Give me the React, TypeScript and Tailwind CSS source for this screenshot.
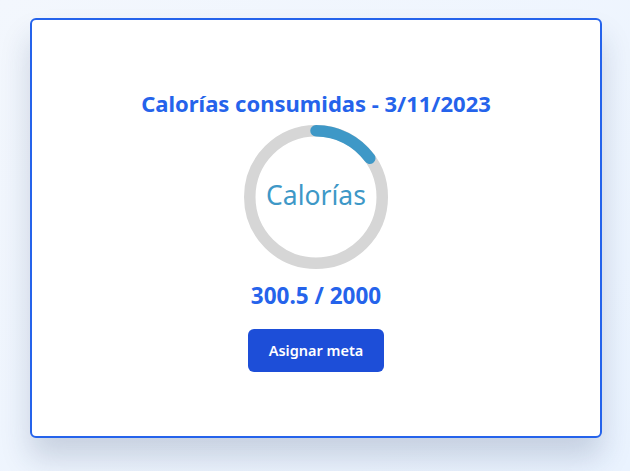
import React from "react";

export default function App() {
  const value = 300.5;
  const goal = 2000;
  const pct = value / goal;
  const r = 46;
  const c = 2 * Math.PI * r;
  return (
    <div
      className="w-[630px] h-[471px] bg-gradient-to-br from-[#f3f7fd] to-[#eaf3ff] pt-[18px] pl-[30px]"
      style={{ fontFamily: '"Noto Sans", "Open Sans", sans-serif' }}
    >
      <div className="w-[572px] h-[420px] bg-white border-2 border-[#2563eb] rounded-md shadow-[0_20px_30px_rgba(30,50,90,0.18)] flex flex-col items-center justify-center pt-[5px]">
        <h1 className="text-[22px] leading-[28px] font-bold text-[#2563eb]">
          Calorías consumidas - 3/11/2023
        </h1>
        <svg viewBox="0 0 100 100" className="w-[144px] h-[144px] mt-[8px]">
          <circle cx="50" cy="50" r={r} fill="none" stroke="#d6d6d6" strokeWidth="8" />
          <circle
            cx="50"
            cy="50"
            r={r}
            fill="none"
            stroke="#3e98c7"
            strokeWidth="8"
            strokeLinecap="round"
            strokeDasharray={`${c} ${c}`}
            strokeDashoffset={c * (1 - pct)}
            transform="rotate(-90 50 50)"
          />
          <text
            x="50"
            y="48.5"
            fill="#3e98c7"
            fontSize="18.4"
            textAnchor="middle"
            dominantBaseline="central"
          >
            Calorías
          </text>
        </svg>
        <div className="mt-[13px] text-[22.5px] leading-[28px] font-bold text-[#2563eb]">
          {value} / {goal}
        </div>
        <button className="mt-[19px] w-[136px] h-[43px] rounded-md bg-[#1d4ed8] text-white text-[14.5px] font-semibold">
          Asignar meta
        </button>
      </div>
    </div>
  );
}
